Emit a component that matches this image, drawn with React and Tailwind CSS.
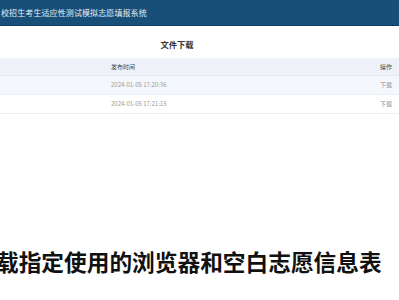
import React from "react";

const rows = [
  { time: "2024-01-05 17:20:36", bg: "bg-[#f4f7fc]" },
  { time: "2024-01-05 17:21:15", bg: "bg-white" },
];

export default function App() {
  return (
    <div
      className="w-[399px] h-[300px] bg-white overflow-hidden flex flex-col"
      style={{ fontFamily: '"Noto Sans CJK SC", "Noto Sans", sans-serif' }}
    >
      {/* top bar */}
      <div className="h-[26px] bg-[#174f78] border-b border-[#0f3c5e] flex items-center shrink-0">
        <span className="text-[8px] text-[#e6eef5] ml-[1px] tracking-[0.1px]">
          校招生考生适应性测试模拟志愿填报系统
        </span>
      </div>

      <div className="h-[12px] shrink-0" />
      <div className="text-center text-[8.3px] font-bold text-[#333] pr-[45px] leading-[12px]">
        文件下载
      </div>
      <div className="h-[8px] shrink-0" />

      {/* table */}
      <div className="text-[6px] leading-none">
        <div className="h-[18px] bg-[#eef1f7] flex items-center border-b border-[#e6eaf0]">
          <span className="ml-[111px] text-[#444]">发布时间</span>
          <span className="ml-auto mr-[7px] text-[#444]">操作</span>
        </div>
        {rows.map((r) => (
          <div key={r.time} className={`h-[19px] ${r.bg} flex items-center border-b border-[#eceff4]`}>
            <span className="ml-[111px] text-[#999]">{r.time}</span>
            <span className="ml-auto mr-[7px] text-[#888]">下载</span>
          </div>
        ))}
      </div>

      <div className="flex-1" />
      <div className="text-[22.7px] font-semibold text-[#111] -ml-[4px] leading-none whitespace-nowrap mb-[26px]">
        载指定使用的浏览器和空白志愿信息表
      </div>
    </div>
  );
}
